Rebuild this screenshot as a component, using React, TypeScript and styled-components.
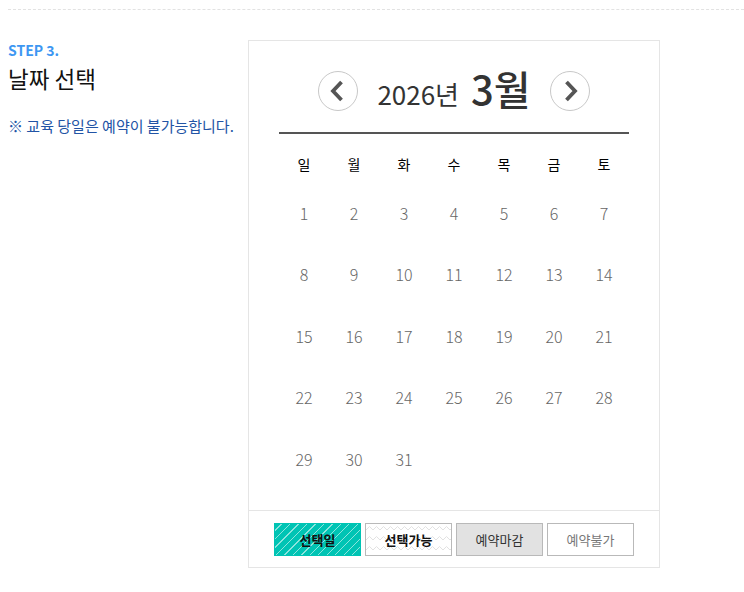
import styled, { createGlobalStyle } from 'styled-components';

const GlobalStyle = createGlobalStyle`
  html, body {
    margin: 0;
    padding: 0;
    background: #fff;
  }
  body {
    font-family: 'Noto Sans CJK KR', 'Noto Sans', sans-serif;
    color: #222;
  }
  * {
    box-sizing: border-box;
  }
`;

const WEEKDAYS = ['일', '월', '화', '수', '목', '금', '토'];
const DAYS = Array.from({ length: 31 }, (_, i) => i + 1);

type LegendKind = 'selected' | 'available' | 'closed' | 'disabled';

const LEGEND: { label: string; kind: LegendKind }[] = [
  { label: '선택일', kind: 'selected' },
  { label: '선택가능', kind: 'available' },
  { label: '예약마감', kind: 'closed' },
  { label: '예약불가', kind: 'disabled' },
];

const zigzag = `url("data:image/svg+xml,%3Csvg xmlns='http://www.w3.org/2000/svg' width='14' height='10'%3E%3Cpath d='M0 6 L3.5 2.5 L7 6 L10.5 2.5 L14 6' fill='none' stroke='%23e2e2e2' stroke-width='1'/%3E%3C/svg%3E")`;

const Arrow = ({ dir }: { dir: 'prev' | 'next' }) => (
  <svg width='22' height='22' viewBox='0 0 22 22'>
    <path
      d={dir === 'prev' ? 'M14.5 2 L6 11 L14.5 20' : 'M7.5 2 L16 11 L7.5 20'}
      fill='none'
      stroke='#555'
      strokeWidth='3.8'
    />
  </svg>
);

export default function App() {
  return (
    <Page>
      <GlobalStyle />
      <Section>
        <Intro>
          <Step>STEP 3.</Step>
          <Title>날짜 선택</Title>
          <Notice>※ 교육 당일은 예약이 불가능합니다.</Notice>
        </Intro>
        <Calendar>
          <Header>
            <NavButton aria-label='이전 달'>
              <Arrow dir='prev' />
            </NavButton>
            <MonthTitle>
              <Year>2026년</Year>
              <Month>3월</Month>
            </MonthTitle>
            <NavButton aria-label='다음 달'>
              <Arrow dir='next' />
            </NavButton>
          </Header>
          <Grid>
            {WEEKDAYS.map((w) => (
              <WeekDay key={w}>{w}</WeekDay>
            ))}
            {DAYS.map((d) => (
              <Day key={d}>{d}</Day>
            ))}
          </Grid>
          <Legend>
            {LEGEND.map((l) => (
              <LegendItem key={l.kind} $kind={l.kind}>
                {l.label}
              </LegendItem>
            ))}
          </Legend>
        </Calendar>
      </Section>
    </Page>
  );
}

const Page = styled('div')`
  padding: 9px 0 0 8px;
  min-height: 592px;
`;

const Section = styled('div')`
  display: flex;
  border-top: 1px dashed #e2e2e2;
  padding-top: 30px;
`;

const Intro = styled('div')`
  width: 240px;
  flex-shrink: 0;
`;

const Step = styled('p')`
  margin: 0;
  font-size: 14px;
  font-weight: 700;
  line-height: 20px;
  color: #3d97f2;
`;

const Title = styled('h2')`
  margin: 3px 0 0;
  font-size: 22.5px;
  font-weight: 400;
  line-height: 30px;
  color: #111;
`;

const Notice = styled('p')`
  margin: 23px 0 0;
  font-size: 15px;
  line-height: 20px;
  color: #2254a5;
`;

const Calendar = styled('div')`
  width: 412px;
  border: 1px solid #e5e5e5;
`;

const Header = styled('div')`
  display: flex;
  justify-content: center;
  align-items: center;
  gap: 19px;
  height: 40px;
  margin: 30px 30px 0;
`;

const NavButton = styled('button')`
  display: flex;
  align-items: center;
  justify-content: center;
  width: 40px;
  height: 40px;
  padding: 0;
  border: 1px solid #c8c8c8;
  border-radius: 50%;
  background: #fff;
  cursor: pointer;
`;

const MonthTitle = styled('h3')`
  display: flex;
  align-items: baseline;
  gap: 12px;
  margin: -6px 0 0;
  color: #333;
  font-weight: 400;
`;

const Year = styled('span')`
  font-size: 26px;
  line-height: 1;
`;

const Month = styled('span')`
  font-size: 40px;
  font-weight: 500;
  line-height: 1;
`;

const Grid = styled('div')`
  display: grid;
  grid-template-columns: repeat(7, 50px);
  grid-template-rows: 37px;
  grid-auto-rows: 61.5px;
  margin: 21px 30px 20px;
  padding-top: 11px;
  border-top: 2px solid #555;
`;

const WeekDay = styled('div')`
  display: flex;
  align-items: center;
  justify-content: center;
  font-size: 14px;
  font-weight: 400;
  color: #000;
`;

const Day = styled('div')`
  display: flex;
  align-items: center;
  justify-content: center;
  font-size: 16px;
  font-weight: 300;
  color: #666;
`;

const kindStyles: Record<LegendKind, string> = {
  selected: `
    border-color: #00c4b4;
    background-color: #00c4b4;
    background-image: repeating-linear-gradient(
      -45deg,
      transparent 0 5px,
      rgba(255, 255, 255, 0.55) 5px 6px
    );
    font-weight: 700;
    color: #111;
  `,
  available: `
    background-color: #fff;
    background-image: ${zigzag};
    font-weight: 700;
    color: #111;
  `,
  closed: `
    background: #e2e2e2;
    color: #333;
  `,
  disabled: `
    background: #fff;
    color: #777;
  `,
};

const Legend = styled('div')`
  display: flex;
  justify-content: center;
  gap: 4px;
  padding: 12px 0 11px;
  border-top: 1px solid #e5e5e5;
`;

const LegendItem = styled('span')<{ $kind: LegendKind }>`
  display: flex;
  align-items: center;
  justify-content: center;
  width: 87px;
  height: 33px;
  border: 1px solid #b9b9b9;
  font-size: 13px;
  ${({ $kind }) => kindStyles[$kind]}
`;
